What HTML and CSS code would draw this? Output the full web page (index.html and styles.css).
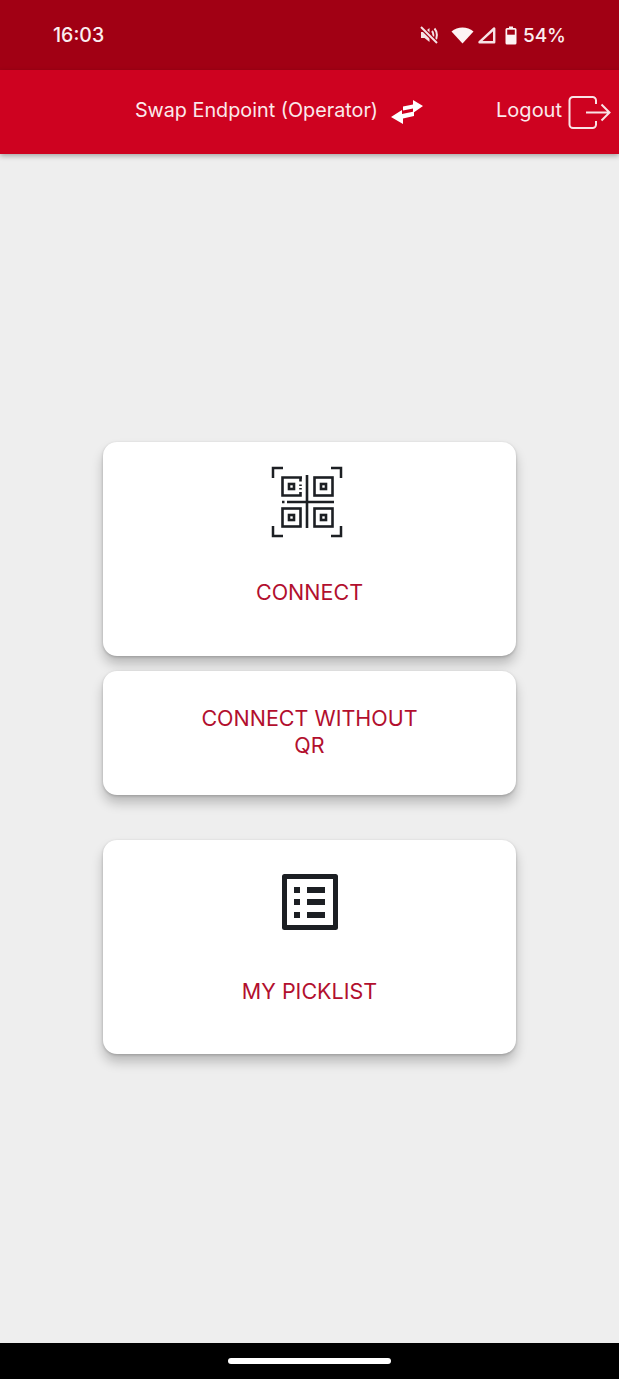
FILE: index.html
```html
<!DOCTYPE html>
<html lang="en">
<head>
    <meta charset="UTF-8">
    <meta name="viewport" content="width=device-width, initial-scale=1.0">
    <title>Home</title>
    <link rel="stylesheet" href="styles.css">
</head>
<body>
<div class="status-bar">
    <span class="status-time">16:03</span>
    <div class="status-icons">
        <!-- muted speaker -->
        <svg class="icon-mute" width="20" height="20" viewBox="0 0 20 20" fill="none">
            <path d="M2 7h3.500L10.500 3v14L5.500 13H2z" fill="#f6e3e6"/>
            <path d="M13 6c1.800 2 1.800 6 0 8M15.500 3.500c3.200 3.500 3.200 9.500 0 13" stroke="#f6e3e6" stroke-width="2"/>
            <path d="M2 2l16 16" stroke="#a10014" stroke-width="4.500"/>
            <path d="M2 2l16 16" stroke="#f6e3e6" stroke-width="2"/>
        </svg>
        <!-- wifi -->
        <svg class="icon-wifi" width="23" height="18" viewBox="0 0 23 18">
            <path d="M0.500 5.500C6.500 0 16.500 0 22.500 5.500L11.500 17.500z" fill="#fdf3f4"/>
        </svg>
        <!-- signal -->
        <svg class="icon-signal" width="19" height="18" viewBox="0 0 19 18" fill="none">
            <path d="M17.200 2.500v13.700H2.500z" stroke="#f6e3e6" stroke-width="2.400" stroke-linejoin="round"/>
        </svg>
        <!-- battery -->
        <svg class="icon-battery" width="12" height="19" viewBox="0 0 12 19">
            <path d="M4 0.500h4v1.500h2a1.500 1.500 0 0 1 1.500 1.500v13.500a1.500 1.500 0 0 1-1.500 1.500H2a1.500 1.500 0 0 1-1.500-1.500V3.500A1.500 1.500 0 0 1 2 2h2z" fill="#fdf3f4"/>
            <rect x="2.200" y="3.700" width="7.600" height="5" fill="#a10014"/>
        </svg>
        <span class="status-battery">54%</span>
    </div>
</div>

<header class="app-header">
    <div class="header-action swap-action">
        <span>Swap Endpoint (Operator)</span>
        <svg width="32" height="26" viewBox="0 0 32 26" fill="#ffffff">
            <path d="M12 11.500V7.500L22 5.500V1l10 6-10 7v-4.500z"/>
            <path d="M0 18l11-7v4l12-2.500V17L12 19.500V25z"/>
        </svg>
    </div>
    <div class="header-action logout-action">
        <span>Logout</span>
        <svg width="43" height="33" viewBox="0 0 43 33" fill="none" stroke="#f9e3e6" stroke-width="2">
            <path d="M28 8V4.500A3.500 3.500 0 0 0 24.500 1H5A3.500 3.500 0 0 0 1.500 4.500v24A3.500 3.500 0 0 0 5 32h19.500a3.500 3.500 0 0 0 3.500-3.500V25"/>
            <path d="M18 16.500h23.500M33.500 8.500l8 8-8 8"/>
        </svg>
    </div>
</header>

<main class="menu">
    <button class="menu-card card-tall">
        <svg class="qr-icon" width="72" height="72" viewBox="0 0 72 72" fill="none" stroke="#1c1f23">
            <path stroke-width="2.500" d="M2 12V2h10M60 2h10v10M2 60v10h10M60 70h10V60"/>
            <g stroke-width="2.600">
                <path d="M31 11.500H11.500v18h18V26M29.500 11.500v4"/>
                <rect x="43.500" y="11.500" width="18" height="18"/>
                <rect x="11.500" y="42.500" width="18" height="18"/>
                <rect x="43.500" y="42.500" width="18" height="18"/>
                <rect x="18" y="18" width="5" height="5"/>
                <rect x="50" y="18" width="5" height="5"/>
                <rect x="18" y="49" width="5" height="5"/>
                <rect x="50" y="49" width="5" height="5"/>
                <path d="M36 9v53M16 36h47M11 36h2.500M29.500 18.500v1.500M29.500 22v1.500"/>
            </g>
        </svg>
        <span class="card-label">CONNECT</span>
    </button>
    <button class="menu-card card-short">
        <span class="card-label">CONNECT WITHOUT<br>QR</span>
    </button>
    <button class="menu-card card-tall card-picklist">
        <svg class="list-icon" width="58" height="58" viewBox="0 0 58 58">
            <path fill-rule="evenodd" fill="#1c1f23" d="M3.500 1h51a2.500 2.500 0 0 1 2.500 2.500v51a2.500 2.500 0 0 1-2.500 2.500h-51a2.500 2.500 0 0 1-2.500-2.500v-51A2.500 2.500 0 0 1 3.500 1zM6 6v46h46V6z"/>
            <rect x="13" y="14" width="6" height="6" fill="#1c1f23"/>
            <rect x="13" y="26" width="6" height="6" fill="#1c1f23"/>
            <rect x="13" y="39" width="6" height="6" fill="#1c1f23"/>
            <rect x="26" y="14" width="18" height="6" fill="#1c1f23"/>
            <rect x="26" y="26" width="18" height="6" fill="#1c1f23"/>
            <rect x="26" y="39" width="18" height="6" fill="#1c1f23"/>
        </svg>
        <span class="card-label">MY PICKLIST</span>
    </button>
</main>

<div class="nav-bar">
    <div class="nav-pill"></div>
</div>
</body>
</html>
```

FILE: styles.css
```css
html, body {
    height: 100%;
}
body {
    font-family: Inter, Roboto, sans-serif;
    display: flex;
    flex-direction: column;
    background-color: #eeeeee;
    margin: 0;
}
.status-bar {
    height: 70px;
    flex: none;
    display: flex;
    align-items: center;
    justify-content: space-between;
    box-sizing: border-box;
    padding: 0 53px 0 53px;
    background-color: #a10014;
    color: #fbeef0;
}
.status-time {
    font-size: 19.500px;
    font-weight: 500;
}
.status-icons {
    display: flex;
    align-items: center;
}
.icon-mute {
    margin-right: 12px;
}
.icon-wifi {
    margin-right: 3px;
}
.icon-signal {
    margin-right: 9px;
}
.icon-battery {
    margin-right: 6px;
}
.status-battery {
    font-size: 19px;
    font-weight: 500;
}
.app-header {
    height: 84px;
    flex: none;
    display: flex;
    align-items: center;
    justify-content: flex-end;
    background-color: #ce0220;
    color: #fbe9eb;
    font-size: 20px;
    box-shadow: 0 2px 5px rgba(0, 0, 0, 0.3);
    position: relative;
}
.header-action {
    display: flex;
    align-items: center;
}
.header-action span {
    position: relative;
    top: -2px;
}
.swap-action {
    margin-right: 73px;
}
.swap-action span {
    font-size: 19.800px;
    margin-right: 13px;
}
.logout-action {
    margin-right: 8px;
}
.logout-action span {
    margin-right: 6px;
}
.menu {
    flex: 1;
    display: flex;
    flex-direction: column;
    align-items: center;
    justify-content: center;
    padding-bottom: 2px;
}
.menu-card {
    width: 413px;
    display: flex;
    flex-direction: column;
    align-items: center;
    border: none;
    padding: 0;
    border-radius: 14px;
    background-color: #ffffff;
    box-shadow: 0 8px 12px rgba(0, 0, 0, 0.22), 0 1px 3px rgba(0, 0, 0, 0.2);
    font-family: inherit;
}
.card-tall {
    height: 214px;
}
.card-short {
    height: 124px;
    margin-top: 15px;
    justify-content: center;
}
.card-short .card-label {
    position: relative;
    top: -1px;
}
.card-picklist {
    margin-top: 45px;
}
.qr-icon {
    margin-top: 24px;
    margin-right: 5px;
}
.list-icon {
    margin-top: 33px;
    margin-left: 1px;
}
.card-label {
    color: #b20f2e;
    font-size: 21.500px;
    line-height: 27px;
    text-align: center;
}
.qr-icon + .card-label {
    margin-top: 41px;
}
.list-icon + .card-label {
    margin-top: 47px;
}
.nav-bar {
    height: 36px;
    flex: none;
    display: flex;
    justify-content: center;
    align-items: center;
    background-color: #000000;
}
.nav-pill {
    width: 163px;
    height: 6px;
    border-radius: 3px;
    background-color: #ffffff;
}
```
